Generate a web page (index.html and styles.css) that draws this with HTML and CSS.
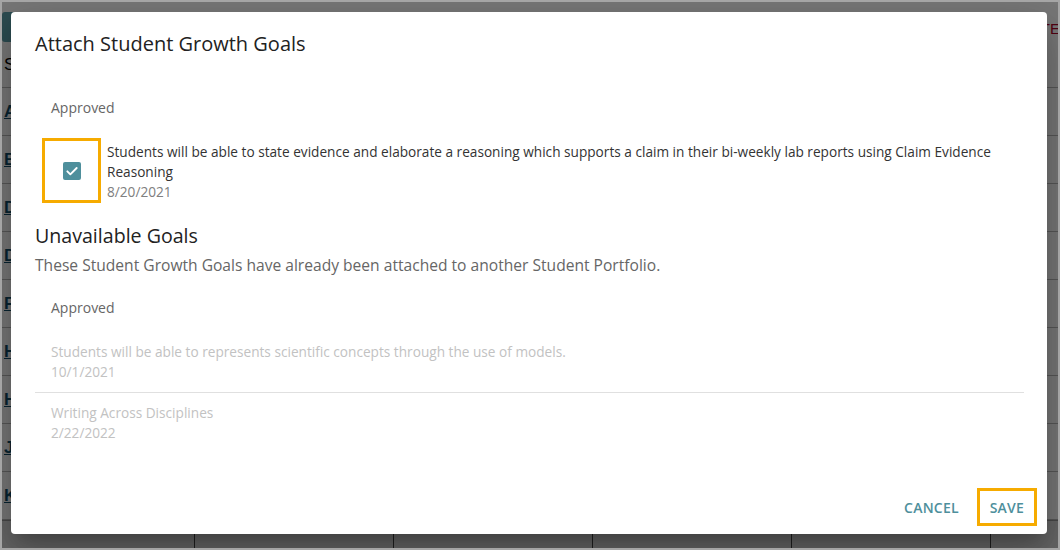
FILE: index.html
```html
<!DOCTYPE html>
<html lang="en">
<head>
<meta charset="utf-8">
<title>Attach Student Growth Goals</title>
<link rel="stylesheet" href="styles.css">
</head>
<body>
<div class="frame">
  <div class="page">
    <div class="toolbar">
      <div class="tool-btn"></div>
      <div class="tool-spacer"></div>
      <div class="tool-link">DELETE</div>
    </div>
    <div class="content">
      <div class="table">
        <div class="row head"><span class="cell-name">S</span></div>
        <div class="row"><a class="cell-name">A</a></div>
        <div class="row"><a class="cell-name">B</a></div>
        <div class="row"><a class="cell-name">D</a></div>
        <div class="row"><a class="cell-name">D</a></div>
        <div class="row"><a class="cell-name">F</a></div>
        <div class="row"><a class="cell-name">H</a></div>
        <div class="row"><a class="cell-name">H</a></div>
        <div class="row"><a class="cell-name">J</a></div>
        <div class="row"><a class="cell-name">K</a></div>
        <div class="row foot">
          <div class="cell"></div><div class="cell"></div><div class="cell"></div><div class="cell"></div><div class="cell"></div><div class="cell"></div>
        </div>
      </div>
      <div class="scrollbar">
        <div class="sb-arrow"></div>
        <div class="sb-thumb"></div>
      </div>
    </div>
  </div>
  <div class="backdrop"></div>
  <div class="dialog">
    <h2 class="dialog-title">Attach Student Growth Goals</h2>
    <div class="dialog-body">
      <div class="subheader">Approved</div>
      <div class="goal selectable">
        <div class="check-wrap">
          <span class="checkbox">
            <svg viewBox="0 0 24 24" width="16" height="16"><path d="M5 12.5l4.5 4.5L19 7.5" fill="none" stroke="#fff" stroke-width="2.8" stroke-linecap="round" stroke-linejoin="round"/></svg>
          </span>
        </div>
        <div class="goal-text">
          <div class="goal-name">Students will be able to state evidence and elaborate a reasoning which supports a claim in their bi-weekly lab reports using Claim Evidence Reasoning</div>
          <div class="goal-date">8/20/2021</div>
        </div>
      </div>
      <h3 class="section-title">Unavailable Goals</h3>
      <p class="section-desc">These Student Growth Goals have already been attached to another Student Portfolio.</p>
      <div class="subheader">Approved</div>
      <div class="goal disabled divided">
        <div class="goal-text">
          <div class="goal-name">Students will be able to represents scientific concepts through the use of models.</div>
          <div class="goal-date">10/1/2021</div>
        </div>
      </div>
      <div class="goal disabled">
        <div class="goal-text">
          <div class="goal-name">Writing Across Disciplines</div>
          <div class="goal-date">2/22/2022</div>
        </div>
      </div>
    </div>
    <div class="dialog-actions">
      <button class="btn">CANCEL</button>
      <button class="btn highlighted">SAVE</button>
    </div>
  </div>
</div>
</body>
</html>
```
FILE: styles.css
```css
* { box-sizing: border-box; }
html, body { margin: 0; padding: 0; }
body {
  width: 1060px;
  height: 550px;
  overflow: hidden;
  font-family: "Open Sans", "Noto Sans", sans-serif;
  background: #a5a5a5;
}
.frame {
  position: relative;
  width: 1060px;
  height: 550px;
  border: 2px solid #a5a5a5;
  overflow: hidden;
  background: #fff;
}
.page {
  width: 100%;
  height: 100%;
  background: #fff;
  display: flex;
  flex-direction: column;
}
.toolbar {
  height: 58px;
  display: flex;
  align-items: flex-start;
  padding-top: 10px;
}
.tool-btn {
  width: 90px;
  height: 30px;
  background: #5fa2ad;
  border-radius: 3px;
}
.tool-spacer { flex: 1; }
.tool-link {
  font-size: 15px;
  color: #b0002a;
  margin-top: 8px;
  margin-right: -2px;
  font-family: "Liberation Sans", sans-serif;
}
.content {
  flex: 1;
  display: flex;
}
.table {
  flex: 1;
  display: flex;
  flex-direction: column;
}
.row {
  height: 48px;
  flex-shrink: 0;
  border-bottom: 1px solid #bbb;
  display: flex;
  align-items: center;
  padding-left: 2px;
  font-family: "Liberation Sans", sans-serif;
  font-size: 17px;
}
.row.head { height: 46px; color: #000; }
.cell-name { width: 12px; overflow: hidden; }
.row a {
  color: #14506a;
  font-weight: bold;
  text-decoration: underline;
}
.row.foot {
  height: 30px;
  background: #d8d8d8;
  padding-left: 0;
  align-items: stretch;
  border-top: 1px solid #999;
}
.row.foot .cell {
  width: 199px;
  border-right: 1px solid #444;
}
.row.foot .cell:first-child { width: 193px; }
.row.foot .cell:last-child { border-right: none; flex: 1; }
.scrollbar {
  width: 10px;
  flex-shrink: 0;
  background: #d0d0d0;
  margin-top: 4px;
}
.sb-arrow {
  height: 10px;
  display: flex;
  justify-content: center;
  align-items: center;
}
.sb-arrow::before {
  content: "";
  border-left: 4px solid transparent;
  border-right: 4px solid transparent;
  border-bottom: 4px solid #555;
}
.sb-thumb {
  height: 384px;
  background: #a9a9a9;
}
.backdrop {
  position: absolute;
  inset: 0;
  background: rgba(0, 0, 0, 0.53);
}
.dialog {
  position: absolute;
  left: 9px;
  top: 10px;
  width: 1036px;
  height: 522px;
  background: #fff;
  border-radius: 4px;
  box-shadow: 0 11px 15px -7px rgba(0,0,0,.2), 0 24px 38px 3px rgba(0,0,0,.14), 0 9px 46px 8px rgba(0,0,0,.12);
  display: flex;
  flex-direction: column;
}
.dialog-title {
  margin: 0;
  padding: 16px 24px 0;
  font-size: 20px;
  line-height: 32px;
  font-weight: 500;
  color: #222;
}
.dialog-body {
  flex: 1;
  padding: 24px 23px 0 24px;
}
.subheader {
  height: 48px;
  line-height: 48px;
  padding-left: 16px;
  font-size: 14px;
  color: #666;
}
.goal {
  display: flex;
  align-items: flex-start;
}
.goal.selectable { padding-left: 7px; }
.check-wrap {
  flex-shrink: 0;
  width: 59px;
  height: 65px;
  margin-top: 6px;
  border: 3px solid #f6ab00;
  display: flex;
  align-items: center;
  justify-content: center;
  padding-left: 1px;
  padding-top: 1px;
}
.checkbox {
  width: 18px;
  height: 18px;
  border-radius: 2px;
  background: #4e8f9c;
  display: flex;
  align-items: center;
  justify-content: center;
}
.goal-text {
  padding-top: 10px;
  padding-left: 6px;
  font-size: 13.65px;
  line-height: 20px;
}
.goal-name { color: #333; }
.goal-date { color: #808080; }
.goal.disabled {
  padding: 0 0 10px 10px;
}
.goal.disabled .goal-name,
.goal.disabled .goal-date { color: #c2c2c2; }
.goal.divided { border-bottom: 1px solid #e0e0e0; }
.section-title {
  margin: 19px 0 0;
  font-size: 19.6px;
  line-height: 28px;
  font-weight: 500;
  color: #222;
}
.section-desc {
  margin: 4px 0 0;
  font-size: 15.6px;
  line-height: 22px;
  color: #666;
}
.section-desc + .subheader { margin-top: 8px; }
.dialog-actions {
  display: flex;
  justify-content: flex-end;
  align-items: center;
  gap: 5px;
  padding: 8px 10px 8px 8px;
}
.btn {
  font-family: inherit;
  font-size: 14px;
  font-weight: 600;
  color: #4e8f9c;
  background: none;
  border: 3px solid transparent;
  height: 38px;
  padding: 0 10px;
  letter-spacing: 0.2px;
  cursor: pointer;
}
.btn.highlighted { border-color: #f6ab00; }
```
